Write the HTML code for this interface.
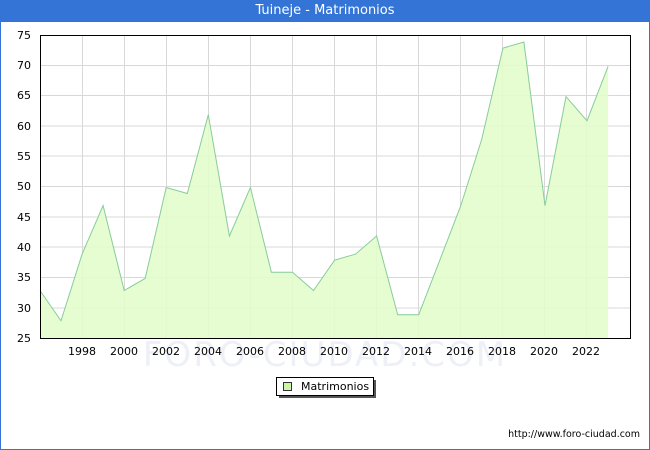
<!DOCTYPE html>
<html><head><style>
body{margin:0;width:650px;height:450px;overflow:hidden;background:#fff;font-family:"DejaVu Sans","Liberation Sans",sans-serif;}
.frame{position:absolute;left:0;top:0;width:648px;height:448px;border:1px solid #3374d6;}
.hdr{position:absolute;left:0;top:0;width:650px;height:22px;background:#3374d6;color:#fff;font-size:13px;text-align:center;line-height:22px;}
svg{position:absolute;left:0;top:0}
</style></head><body>
<div class="frame"></div>
<div class="hdr">Tuineje - Matrimonios</div>
<svg width="650" height="450" font-family="DejaVu Sans, Liberation Sans, sans-serif" font-size="11">
<g stroke="#d8d8d8" stroke-width="1">
<line x1="40" y1="65.5" x2="630" y2="65.5"/><line x1="40" y1="95.5" x2="630" y2="95.5"/><line x1="40" y1="126" x2="630" y2="126"/><line x1="40" y1="156" x2="630" y2="156"/><line x1="40" y1="186.5" x2="630" y2="186.5"/><line x1="40" y1="217" x2="630" y2="217"/><line x1="40" y1="247" x2="630" y2="247"/><line x1="40" y1="277.5" x2="630" y2="277.5"/><line x1="40" y1="308" x2="630" y2="308"/>
<line x1="82.5" y1="35" x2="82.5" y2="338"/><line x1="124.5" y1="35" x2="124.5" y2="338"/><line x1="166.5" y1="35" x2="166.5" y2="338"/><line x1="208.5" y1="35" x2="208.5" y2="338"/><line x1="250.5" y1="35" x2="250.5" y2="338"/><line x1="292.5" y1="35" x2="292.5" y2="338"/><line x1="334.5" y1="35" x2="334.5" y2="338"/><line x1="376.5" y1="35" x2="376.5" y2="338"/><line x1="418.5" y1="35" x2="418.5" y2="338"/><line x1="460.5" y1="35" x2="460.5" y2="338"/><line x1="502.5" y1="35" x2="502.5" y2="338"/><line x1="544.5" y1="35" x2="544.5" y2="338"/><line x1="586.5" y1="35" x2="586.5" y2="338"/>
</g>
<text x="325" y="366" font-size="34" fill="#eef0f8" text-anchor="middle" letter-spacing="2">FORO-CIUDAD.COM</text>
<polygon fill="#e2fdcc" fill-opacity="0.9" points="40,290.5 61,320.8 82.1,254.1 103.1,205.6 124.2,290.5 145.2,278.4 166.2,187.5 187.3,193.5 208.3,114.8 229.4,236 250.4,187.5 271.4,272.3 292.5,272.3 313.5,290.5 334.6,260.2 355.6,254.1 376.6,236 397.7,314.8 418.7,314.8 439.8,260.2 460.8,205.6 481.8,139 502.9,48.1 523.9,42 545,205.6 566,96.6 587,120.8 608.1,66.3 608.1,338 40,338"/>
<polyline fill="none" stroke="#88cc99" stroke-width="1" points="40,290.5 61,320.8 82.1,254.1 103.1,205.6 124.2,290.5 145.2,278.4 166.2,187.5 187.3,193.5 208.3,114.8 229.4,236 250.4,187.5 271.4,272.3 292.5,272.3 313.5,290.5 334.6,260.2 355.6,254.1 376.6,236 397.7,314.8 418.7,314.8 439.8,260.2 460.8,205.6 481.8,139 502.9,48.1 523.9,42 545,205.6 566,96.6 587,120.8 608.1,66.3"/>
<rect x="40.5" y="35.5" width="590" height="303" fill="none" stroke="#000" stroke-width="1"/>
<g text-anchor="end" fill="#000">
<text x="31" y="39">75</text><text x="31" y="69">70</text><text x="31" y="99">65</text><text x="31" y="130">60</text><text x="31" y="160">55</text><text x="31" y="190">50</text><text x="31" y="221">45</text><text x="31" y="251">40</text><text x="31" y="281">35</text><text x="31" y="312">30</text><text x="31" y="342">25</text>
</g>
<g text-anchor="middle" fill="#000">
<text x="82" y="355">1998</text><text x="124" y="355">2000</text><text x="166" y="355">2002</text><text x="208" y="355">2004</text><text x="250" y="355">2006</text><text x="292" y="355">2008</text><text x="334" y="355">2010</text><text x="376" y="355">2012</text><text x="418" y="355">2014</text><text x="460" y="355">2016</text><text x="502" y="355">2018</text><text x="544" y="355">2020</text><text x="586" y="355">2022</text>
</g>
<rect x="279" y="380" width="97" height="18" fill="#555"/>
<rect x="276.5" y="377.5" width="97" height="18" fill="#fff" stroke="#000"/>
<rect x="283.5" y="382.5" width="8" height="8" fill="#ccf5a8" stroke="#333"/>
<text x="301" y="390" fill="#000">Matrimonios</text>
<text x="640" y="437" text-anchor="end" font-size="9.5" fill="#000">http://www.foro-ciudad.com</text>
</svg>
</body></html>
